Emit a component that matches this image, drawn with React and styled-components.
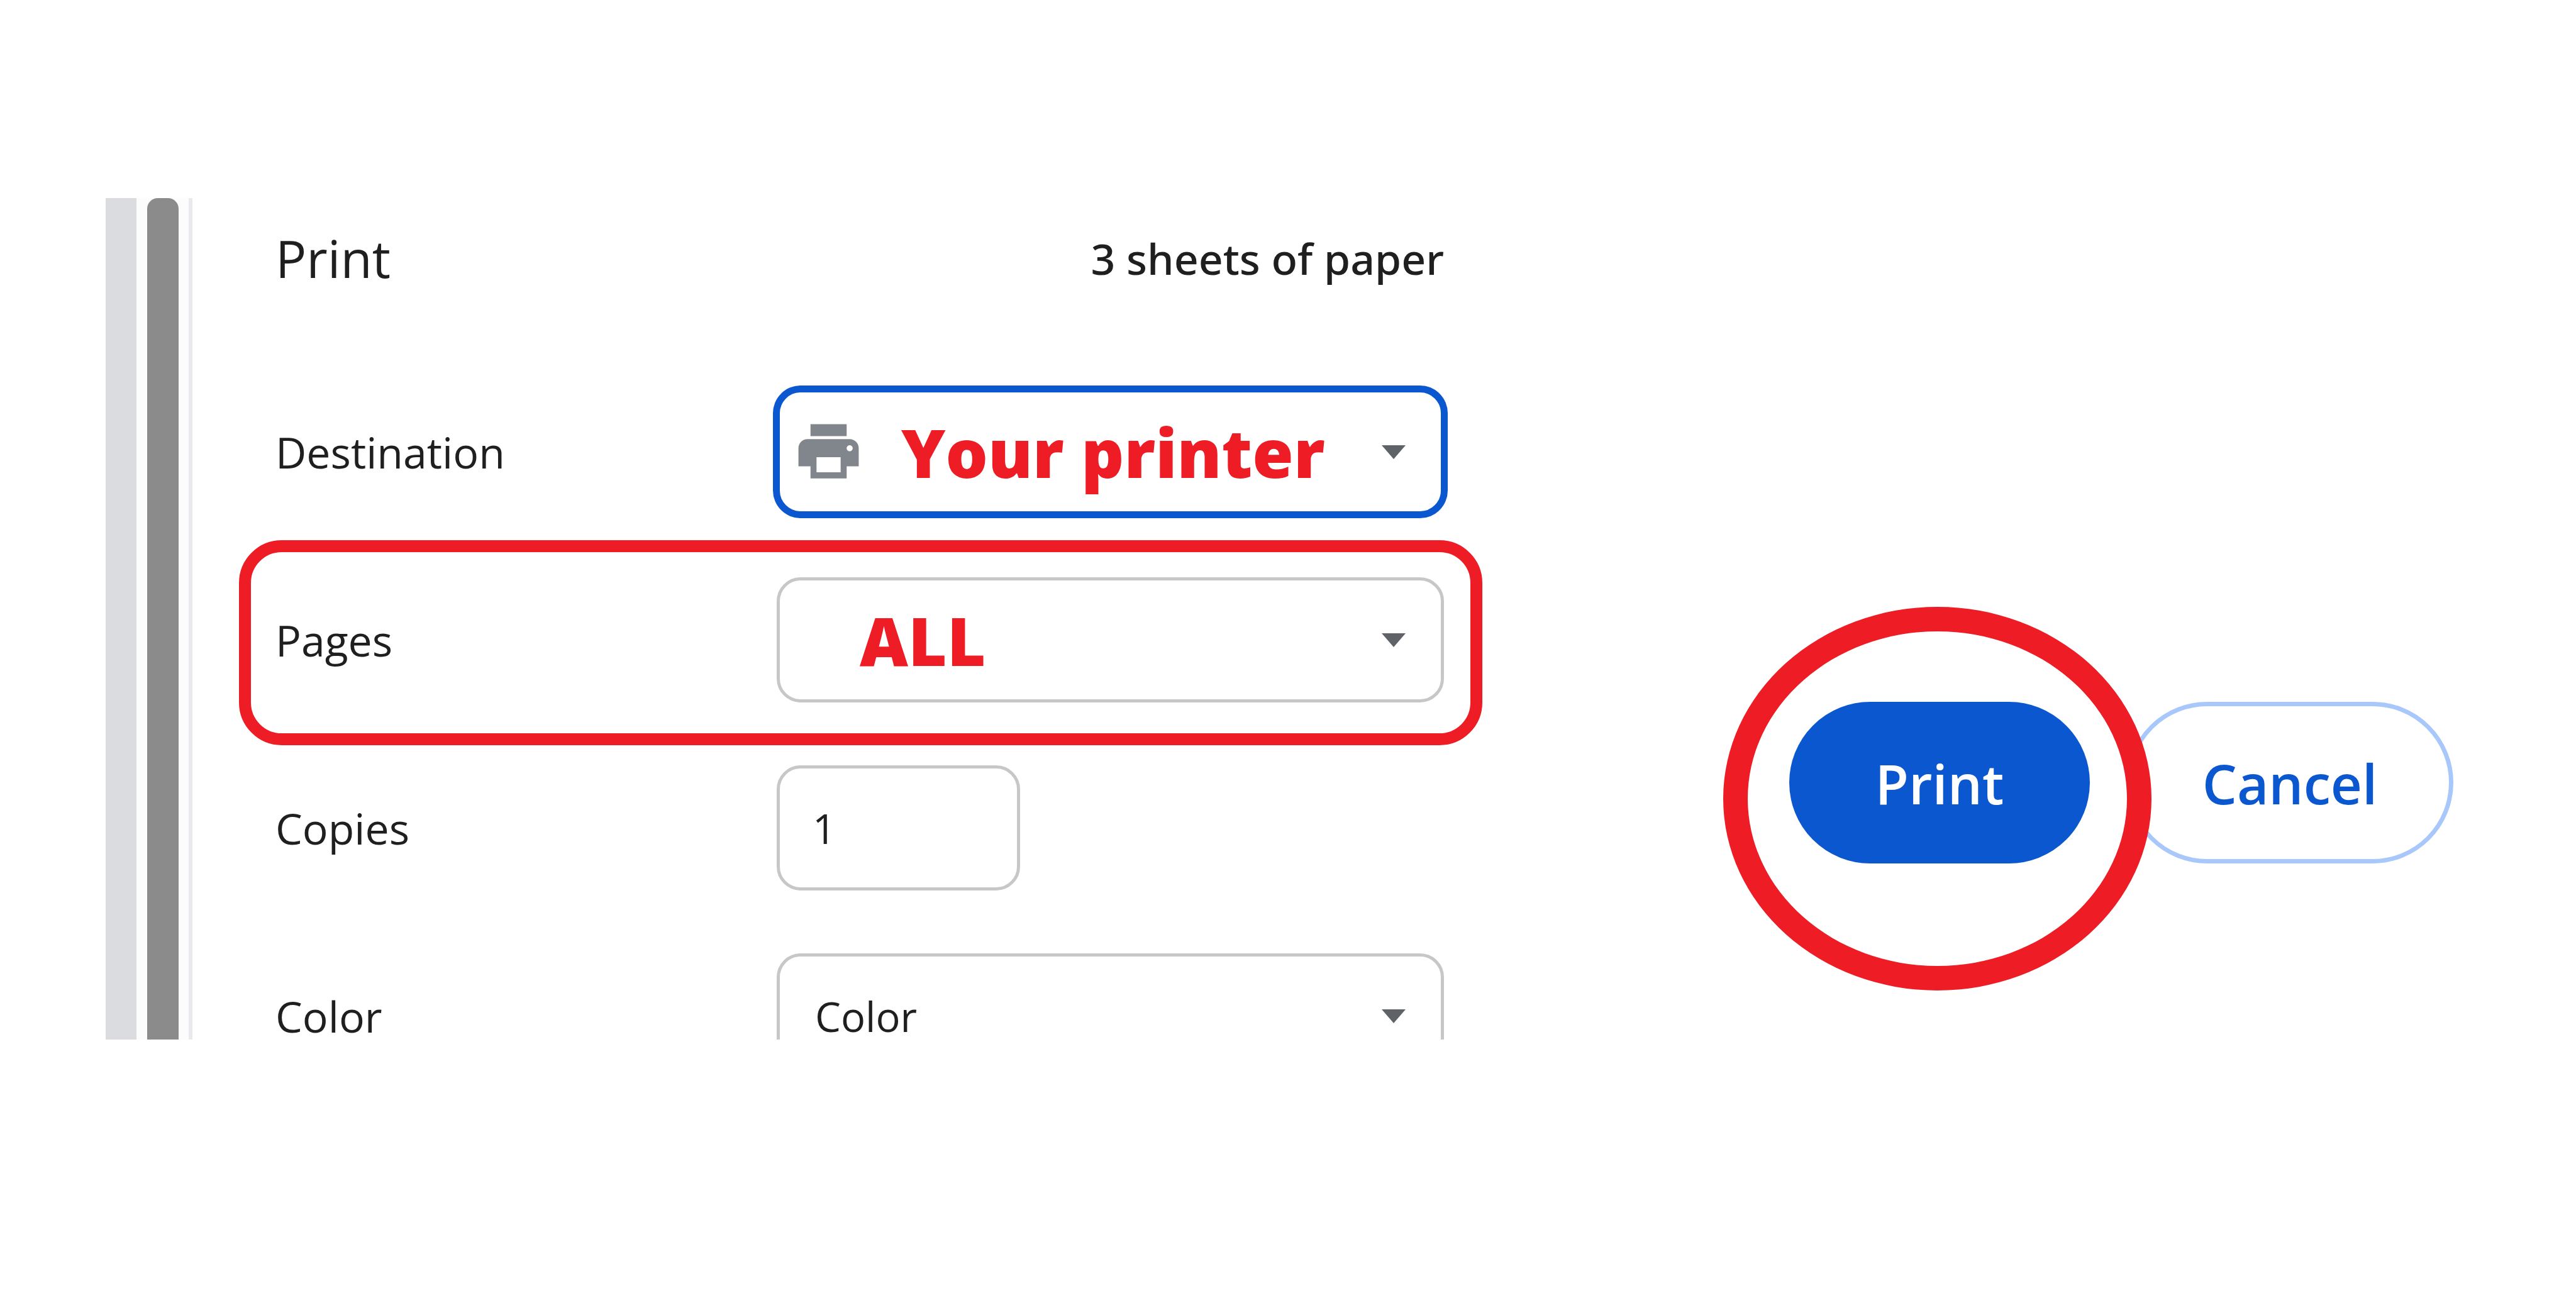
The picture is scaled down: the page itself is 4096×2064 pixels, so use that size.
import React, { useState } from "react"
import styled, { createGlobalStyle } from "styled-components"
import { MdPrint } from "react-icons/md"

const GlobalStyle = createGlobalStyle`
  * {
    box-sizing: border-box;
  }
  body {
    margin: 0;
    background: #fff;
    color: #1f1f1f;
    font-family: "Open Sans", "Noto Sans", sans-serif;
  }
`
const Page = styled.main`
  display: flex;
  align-items: flex-start;
  gap: 543px;
  min-height: 100vh;
  padding: 315px 195px 0 168px;
`
const Dialog = styled.section`
  flex: 1;
  display: flex;
  height: 1338px;
  /* cut the settings off at the bottom, but let the marker stick out sideways */
  overflow-x: visible;
  overflow-y: clip;
`
const Preview = styled.div`
  width: 49px;
  background: #dadce0;
`
const ScrollTrack = styled.div`
  width: 83px;
  padding: 0 16px 0 17px;
  background: #fcfcfc;
`
const ScrollThumb = styled.div`
  height: 100%;
  background: #8b8b8b;
  border-radius: 17px 17px 0 0;
`
const Sidebar = styled.div`
  flex: 1;
  padding: 0 6px 0 132px;
  border-left: 6px solid #e8eaed;
`
const SidebarHeader = styled.header`
  display: flex;
  align-items: center;
  justify-content: space-between;
  height: 190px;
  margin-bottom: 114px;
  >h1 {
    margin: 0;
    font-size: 82px;
    font-weight: 400;
  }
  >span {
    font-family: "Noto Sans", sans-serif;
    font-size: 68px;
    font-weight: 500;
  }
`
const Settings = styled.form`
  display: flex;
  flex-direction: column;
  gap: 100px;
`
const Row = styled.div`
  position: relative;
  display: grid;
  grid-template-columns: 797px 1fr;
  align-items: center;
  >label {
    font-size: 68px;
    line-height: 68px;
  }
`
const RowMarker = styled.div`
  position: absolute;
  inset: -59px -61px -68px -58px;
  border: 19px solid #ee1c25;
  border-radius: 68px;
  pointer-events: none;
`
const Control = styled.div`
  position: relative;
  height: 199px;
  >select {
    padding: 0 120px 0 ${({ $indent }) => $indent || 56}px;
  }
`
const fieldStyles = `
  width: 100%;
  height: 199px;
  margin: 0;
  border: 5px solid #c7c7c7;
  border-radius: 38px;
  outline: none;
  background: #fff;
  color: #1f1f1f;
  font-family: inherit;
  font-size: 65px;
`
const Select = styled.select`
  ${fieldStyles}
  appearance: none;
  ${({ $active }) => $active && `
    border-color: #0b57d0;
    box-shadow: 0 0 0 6px #0b57d0;
  `}
  ${({ $callout }) => $callout && `
    color: #ee1c25;
    font-size: 106px;
    font-weight: 800;
  `}
`
const CopiesInput = styled.input`
  ${fieldStyles}
  width: 387px;
  padding: 0 52px;
`
const PrinterIcon = styled(MdPrint)`
  position: absolute;
  top: 41px;
  left: 25px;
  width: 115px;
  height: 115px;
  color: #80868b;
  pointer-events: none;
`
const Arrow = styled.span`
  position: absolute;
  top: 89px;
  right: 61px;
  border: solid transparent;
  border-width: 22px 19px 0;
  border-top-color: #5f6368;
  pointer-events: none;
`
const Actions = styled.div`
  display: flex;
  gap: 58px;
  padding-top: 801px;
`
const PrintAction = styled.div`
  position: relative;
`
const CircleMarker = styled.div`
  position: absolute;
  z-index: 1;
  inset: -151px -98px -202px -105px;
  border: 39px solid #ee1c25;
  border-radius: 50%;
  pointer-events: none;
`
const Button = styled.button`
  width: ${({ $primary }) => $primary ? "478px" : "520px"};
  height: 257px;
  padding: 0;
  border: 7px solid ${({ $primary }) => $primary ? "#0b57d0" : "#a8c7fa"};
  border-radius: 129px;
  background: ${({ $primary }) => $primary ? "#0b57d0" : "#fff"};
  color: ${({ $primary }) => $primary ? "#fff" : "#0b57d0"};
  font-family: inherit;
  font-size: 87px;
  font-weight: 600;
  cursor: pointer;
`

const App = () => {
  const [copies, setCopies] = useState("1")

  return (
  <>
    <GlobalStyle />
    <Page>
      <Dialog>
        <Preview />
        <ScrollTrack>
          <ScrollThumb />
        </ScrollTrack>
        <Sidebar>
          <SidebarHeader>
            <h1>Print</h1>
            <span>3 sheets of paper</span>
          </SidebarHeader>
          <Settings>
            <Row>
              <label htmlFor="destination">Destination</label>
              <Control $indent={193}>
                <Select id="destination" $active $callout>
                  <option>Your printer</option>
                </Select>
                <PrinterIcon />
                <Arrow />
              </Control>
            </Row>
            <Row>
              <label htmlFor="pages">Pages</label>
              <Control $indent={127}>
                <Select id="pages" $callout>
                  <option>ALL</option>
                </Select>
                <Arrow />
              </Control>
              <RowMarker />
            </Row>
            <Row>
              <label htmlFor="copies">Copies</label>
              <Control>
                <CopiesInput
                  id="copies"
                  inputMode="numeric"
                  value={copies}
                  onChange={e => setCopies(e.target.value)}
                />
              </Control>
            </Row>
            <Row>
              <label htmlFor="color">Color</label>
              <Control>
                <Select id="color">
                  <option>Color</option>
                </Select>
                <Arrow />
              </Control>
            </Row>
          </Settings>
        </Sidebar>
      </Dialog>
      <Actions>
        <PrintAction>
          <Button type="button" $primary>Print</Button>
          <CircleMarker />
        </PrintAction>
        <Button type="button">Cancel</Button>
      </Actions>
    </Page>
  </>
  )}

export default App
